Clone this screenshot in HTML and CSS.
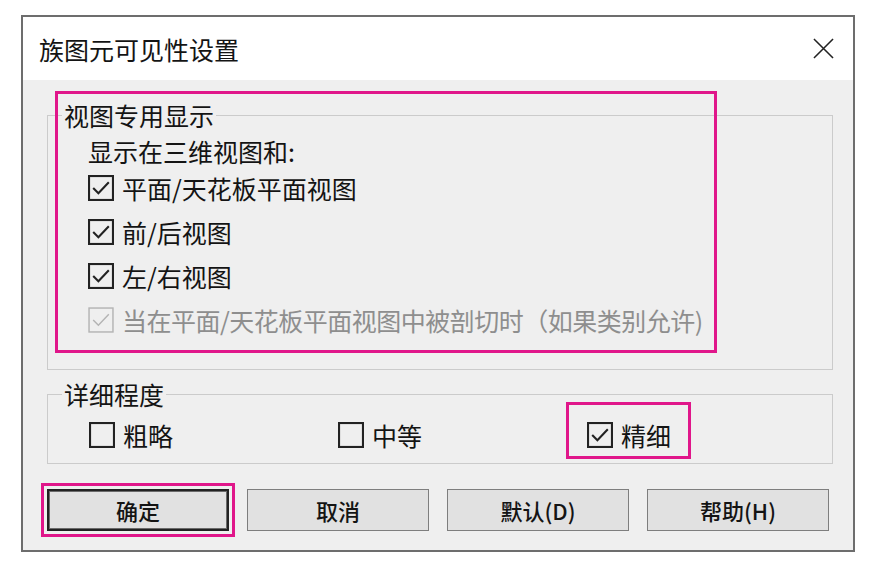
FILE: index.html
```html
<!DOCTYPE html>
<html lang="zh-CN">

<head>
    <meta charset="UTF-8">
    <meta name="viewport" content="width=device-width, initial-scale=1.0">
    <title>族图元可见性设置</title>
    <link rel="stylesheet" href="styles.css">
</head>

<body>
    <div class="dialog">
        <div class="titlebar">
            <span class="title">族图元可见性设置</span>
            <svg class="close" viewBox="0 0 22 22"><path d="M1 1L21 21M21 1L1 21"/></svg>
        </div>
        <div class="body">
            <fieldset class="group">
                <legend>视图专用显示</legend>
                <div class="rows">
                    <div class="caption">显示在三维视图和:</div>
                    <label class="check first">
                        <svg class="box" viewBox="0 0 25 25"><rect x="1" y="1" width="23" height="23"/><path d="M5 12.5L10 17.5L20 7"/></svg>
                        平面/天花板平面视图
                    </label>
                    <label class="check">
                        <svg class="box" viewBox="0 0 25 25"><rect x="1" y="1" width="23" height="23"/><path d="M5 12.5L10 17.5L20 7"/></svg>
                        前/后视图
                    </label>
                    <label class="check">
                        <svg class="box" viewBox="0 0 25 25"><rect x="1" y="1" width="23" height="23"/><path d="M5 12.5L10 17.5L20 7"/></svg>
                        左/右视图
                    </label>
                    <label class="check disabled">
                        <svg class="box" viewBox="0 0 25 25"><rect x="1" y="1" width="23" height="23"/><path d="M5 12.5L10 17.5L20 7"/></svg>
                        当在平面/天花板平面视图中被剖切时（如果类别允许)
                    </label>
                </div>
            </fieldset>

            <fieldset class="group detail">
                <legend>详细程度</legend>
                <div class="levels">
                    <label class="check">
                        <svg class="box" viewBox="0 0 25 25"><rect x="1" y="1" width="23" height="23"/></svg>
                        粗略
                    </label>
                    <label class="check">
                        <svg class="box" viewBox="0 0 25 25"><rect x="1" y="1" width="23" height="23"/></svg>
                        中等
                    </label>
                    <label class="check">
                        <svg class="box" viewBox="0 0 25 25"><rect x="1" y="1" width="23" height="23"/><path d="M5 12.5L10 17.5L20 7"/></svg>
                        精细
                    </label>
                </div>
            </fieldset>

            <div class="buttons">
                <button class="default">确定</button>
                <button>取消</button>
                <button>默认(D)</button>
                <button>帮助(H)</button>
            </div>

            <!-- 강조 표시 -->
            <div class="mark mark-view"></div>
            <div class="mark mark-fine"></div>
        </div>
    </div>
</body>

</html>
```

FILE: styles.css
```css
body {
    margin: 0;
    background: #fff;
    font-family: "Noto Sans CJK SC", sans-serif;
    color: #141414;
}

.dialog {
    width: 834px;
    height: 537px;
    margin: 15px 0 0 21px;
    border: 2px solid #6d6d6d;
    box-sizing: border-box;
    display: flex;
    flex-direction: column;
}

.titlebar {
    height: 63px;
    background: #fff;
    display: flex;
    align-items: center;
    justify-content: space-between;
    padding: 0 19px 0 16px;
}

.title {
    font-size: 25px;
    line-height: 24px;
}

.close {
    width: 21px;
    height: 21px;
}

.close path {
    fill: none;
    stroke: #222;
    stroke-width: 1.6;
}

.body {
    flex: 1;
    position: relative;
    background: #efefef;
    padding: 23px 20px 0 24px;
}

.group {
    margin: 0;
    min-width: 0;
    border: 1px solid #cbcbcb;
    padding: 12px 0 33px 14px;
}

.group legend {
    padding: 0 2px;
    font-size: 25px;
    line-height: 24px;
}

.rows {
    display: flex;
    flex-direction: column;
    padding-left: 26px;
}

.caption {
    font-size: 25px;
    line-height: 24px;
}

.check {
    display: flex;
    align-items: center;
    gap: 8px;
    height: 32px;
    margin-top: 12px;
    font-size: 25px;
    line-height: 24px;
}

.check.first {
    margin-top: 9px;
}

.box {
    width: 26px;
    height: 26px;
    flex-shrink: 0;
}

.box rect,
.box path {
    fill: none;
    stroke: #222;
    stroke-width: 2;
}

.disabled {
    color: #8e8e8e;
    letter-spacing: -0.5px;
}

.disabled .box rect,
.disabled .box path {
    stroke: #b4b4b4;
    stroke-width: 1.4;
}

.detail {
    margin-top: 12px;
    padding: 13px 0 12px 14px;
}

.levels {
    display: grid;
    grid-template-columns: 249px 249px 1fr;
    padding-left: 27px;
}

.levels .check {
    margin-top: 0;
}

.buttons {
    display: flex;
    gap: 18px;
    margin-top: 25px;
}

.buttons button {
    width: 182px;
    height: 42px;
    background: #e1e1e1;
    border: 1px solid #7e7e7e;
    font-family: "Noto Sans CJK SC", sans-serif;
    font-size: 22px;
    font-weight: 500;
    color: #141414;
    padding: 0;
}

.buttons .default {
    border: 2px solid #222;
    box-shadow: inset 0 0 0 1px #6a6a6a;
    outline: 3px solid #e0168a;
    outline-offset: 3px;
}

.mark {
    position: absolute;
    border: 3px solid #e0168a;
    box-sizing: border-box;
    pointer-events: none;
}

.mark-view {
    left: 32px;
    top: 11px;
    width: 662px;
    height: 262px;
}

.mark-fine {
    left: 543px;
    top: 322px;
    width: 125px;
    height: 57px;
}
```
